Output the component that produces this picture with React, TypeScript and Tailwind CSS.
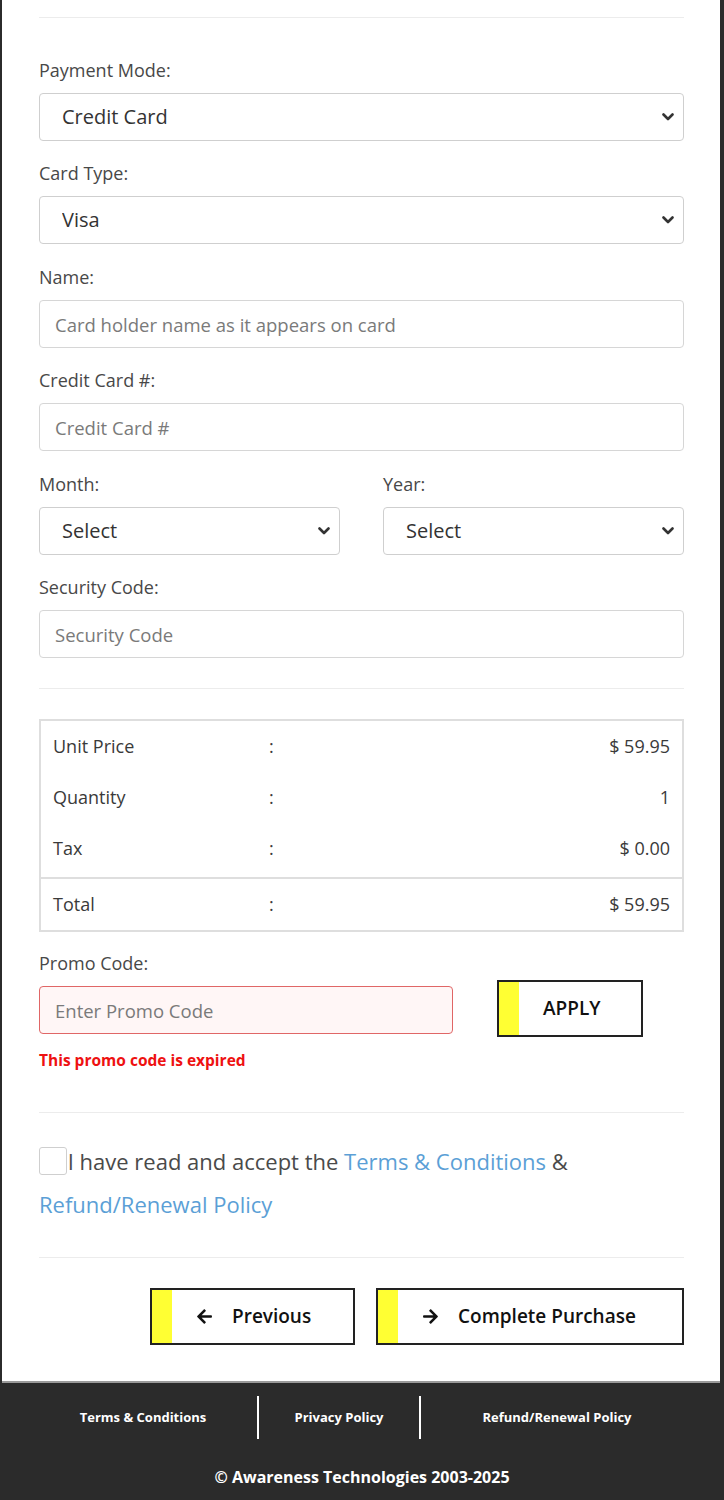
import { FaArrowLeft, FaArrowRight } from "react-icons/fa";

const font = { fontFamily: '"Open Sans", "Liberation Sans", sans-serif' };

function Chevron() {
  return (
    <svg
      className="pointer-events-none absolute right-[10px] top-1/2 -translate-y-1/2"
      width="12"
      height="9"
      viewBox="0 0 12 9"
      fill="none"
    >
      <path d="M1.5 2 L6 6.5 L10.5 2" stroke="#333" strokeWidth="2.6" strokeLinecap="round" strokeLinejoin="round" />
    </svg>
  );
}

function Label({ children }: { children: React.ReactNode }) {
  return <label className="mb-[12px] block text-[18px] font-medium leading-[22px] text-[#484848]">{children}</label>;
}

function Select({ value }: { value: string }) {
  return (
    <div className="relative">
      <select
        defaultValue={value}
        className="h-[48px] w-full appearance-none rounded-[4px] border border-[#cfcfcf] bg-white pl-[22px] text-[20px] font-medium text-[#333] outline-none"
        style={font}
      >
        <option>{value}</option>
      </select>
      <Chevron />
    </div>
  );
}

function Input({ placeholder }: { placeholder: string }) {
  return (
    <input
      placeholder={placeholder}
      className="h-[48px] w-full rounded-[4px] border border-[#d6d6d6] bg-white px-[15px] text-[18.5px] text-[#333] outline-none placeholder:text-[#7a7a7a]"
      style={font}
    />
  );
}

function Field({
  label,
  children,
  className = "mb-[21px]",
}: {
  label: string;
  children: React.ReactNode;
  className?: string;
}) {
  return (
    <div className={className}>
      <Label>{label}</Label>
      {children}
    </div>
  );
}

const rows: [string, string][] = [
  ["Unit Price", "$ 59.95"],
  ["Quantity", "1"],
  ["Tax", "$ 0.00"],
];

function SummaryRow({ label, value }: { label: string; value: string }) {
  return (
    <div className="flex h-[51px] items-center text-[18px] font-medium text-[#3a3a3a]">
      <span className="w-[216px]">{label}</span>
      <span className="flex-1">:</span>
      <span>{value}</span>
    </div>
  );
}

function YellowButton({
  children,
  className,
}: {
  children: React.ReactNode;
  className: string;
}) {
  return (
    <button className={`flex border-2 border-[#222] bg-white ${className}`}>
      <span className="w-[20px] shrink-0 bg-[#ffff33]" />
      <span className="flex flex-1 items-center justify-start gap-[19px] pl-[24px] text-[19px] font-semibold text-[#111]">
        {children}
      </span>
    </button>
  );
}

export default function App() {
  return (
    <div className="min-h-screen bg-[#2b2b2b]" style={font}>
      <div className="ml-[2px] mr-[4px] border-b-2 border-[#9a9a9a] bg-white pl-[37px] pr-[36px] pb-[36px]">
        <div className="h-[17px]" />
        <div className="border-t border-[#ececec]" />
        <div className="h-[41px]" />

        <Field label="Payment Mode:">
          <Select value="Credit Card" />
        </Field>
        <Field label="Card Type:" className="mb-[22px]">
          <Select value="Visa" />
        </Field>
        <Field label="Name:">
          <Input placeholder="Card holder name as it appears on card" />
        </Field>
        <Field label="Credit Card #:" className="mb-[22px]">
          <Input placeholder="Credit Card #" />
        </Field>
        <div className="grid grid-cols-2 gap-x-[43px]">
          <Field label="Month:">
            <Select value="Select" />
          </Field>
          <Field label="Year:">
            <Select value="Select" />
          </Field>
        </div>
        <div>
          <Label>Security Code:</Label>
          <Input placeholder="Security Code" />
        </div>

        <div className="mt-[30px] border-t border-[#ececec]" />

        <div className="mt-[30px] border-2 border-[#dedede] px-[12px]">
          <div className="pb-[3px]">
            {rows.map(([l, v]) => (
              <SummaryRow key={l} label={l} value={v} />
            ))}
          </div>
          <div className="-mx-[12px] border-t-2 border-[#dedede]" />
          <SummaryRow label="Total" value="$ 59.95" />
        </div>

        <div className="mt-[20px] flex items-start">
          <div className="w-[414px]">
            <Label>Promo Code:</Label>
            <input
              placeholder="Enter Promo Code"
              className="h-[48px] w-full rounded-[4px] border border-[#e06666] bg-[#fff6f6] px-[15px] text-[18.5px] outline-none placeholder:text-[#7a7a7a]"
              style={font}
            />
            <p className="mt-[17px] text-[15.5px] font-bold leading-[18px] text-[#ee1111]">
              This promo code is expired
            </p>
          </div>
          <div className="ml-[44px] pt-[28px]">
            <YellowButton className="h-[57px] w-[146px]">APPLY</YellowButton>
          </div>
        </div>

        <div className="mt-[43px] border-t border-[#ececec]" />

        <div className="mt-[27px] text-[22px] font-medium leading-[43px] text-[#4a4a4a]">
          <span className="mr-[-3px] inline-block h-[28px] w-[28px] translate-y-[7px] rounded-[3px] border border-[#cfcfcf] bg-white align-top" />
          <span className="ml-[-2px]"> I have read and accept the </span>
          <a className="text-[#5b9fd6]">Terms &amp; Conditions</a>
          <span> &amp; </span>
          <br />
          <a className="text-[#5b9fd6]">Refund/Renewal Policy</a>
        </div>

        <div className="mt-[31px] border-t border-[#ececec]" />

        <div className="mt-[30px] flex justify-end gap-[21px]">
          <YellowButton className="h-[57px] w-[205px]">
            <FaArrowLeft className="text-[17px]" />
            <span>Previous</span>
          </YellowButton>
          <YellowButton className="h-[57px] w-[308px]">
            <FaArrowRight className="text-[17px]" />
            <span>Complete Purchase</span>
          </YellowButton>
        </div>
      </div>

      <footer className="pt-[13px] pb-[14px] text-white">
        <div className="flex items-stretch pl-[29px] pr-[31px] text-[13px] font-bold">
          <div className="flex h-[43px] w-[228px] items-center justify-center">Terms &amp; Conditions</div>
          <div className="flex h-[43px] w-[164px] items-center justify-center border-x-2 border-white">
            Privacy Policy
          </div>
          <div className="flex h-[43px] flex-1 items-center justify-center">Refund/Renewal Policy</div>
        </div>
        <p className="mt-[26px] text-center text-[16px] font-bold">© Awareness Technologies 2003-2025</p>
      </footer>
    </div>
  );
}
